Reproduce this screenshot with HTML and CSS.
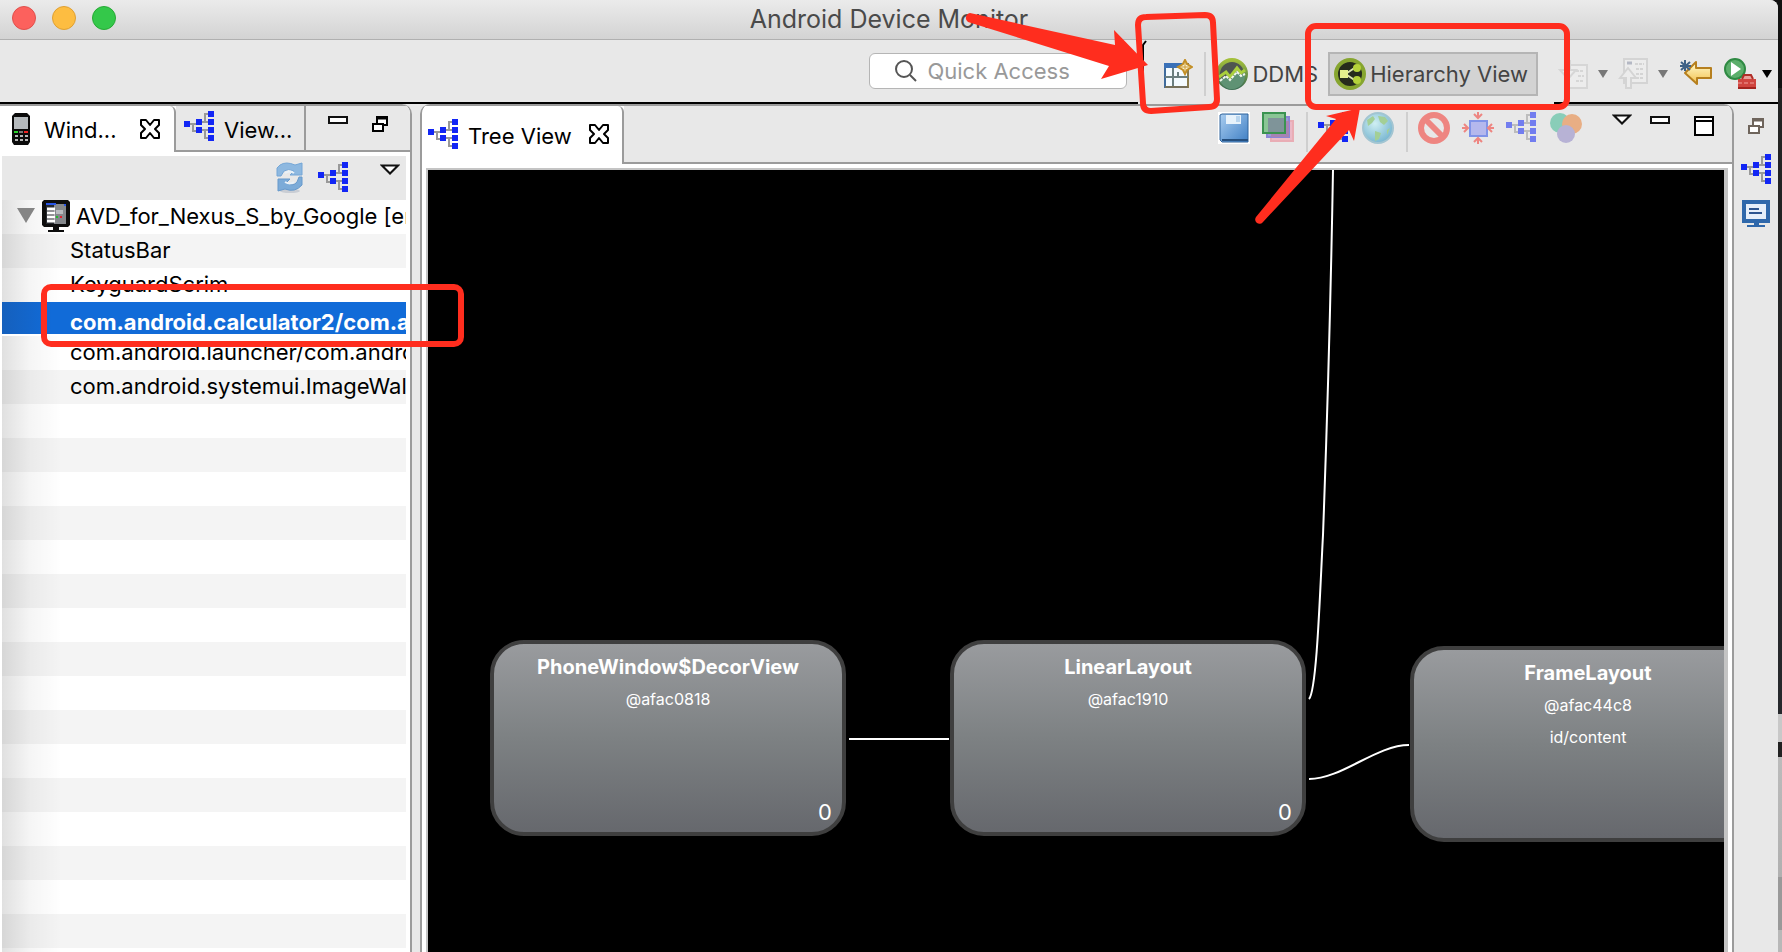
FILE: index.html
```html
<!DOCTYPE html>
<html lang="en">
<head>
<meta charset="utf-8">
<title>Android Device Monitor</title>
<link rel="stylesheet" href="styles.css">
</head>
<body>
<svg class="defs" aria-hidden="true">
  <defs>
    <linearGradient id="blue" x1="0" y1="0" x2="1" y2="1"><stop offset="0" stop-color="#a9cdf0"/><stop offset="1" stop-color="#3f7fc4"/></linearGradient>
    <linearGradient id="green" x1="0" y1="0" x2="0" y2="1"><stop offset="0" stop-color="#a3bf3a"/><stop offset="1" stop-color="#3d6d52"/></linearGradient>
    <linearGradient id="gold" x1="0" y1="0" x2="0" y2="1"><stop offset="0" stop-color="#fffbd0"/><stop offset="1" stop-color="#f3c04c"/></linearGradient>
    <radialGradient id="sea" cx=".4" cy=".35" r=".7"><stop offset="0" stop-color="#cfeff2"/><stop offset="1" stop-color="#74b3cf"/></radialGradient>
    <symbol id="tree" viewBox="0 0 30 30">
      <path d="M6 13h6M9 12v8h3M18 11h6M18 19h6M21 11V3h3M21 19v8h3" fill="none" stroke="#999" stroke-width="2"/>
      <path d="M0 10h6v6H0zM12 8h6v6h-6zM12 16h6v6h-6zM24 0h6v6h-6zM24 8h6v6h-6zM24 16h6v6h-6zM24 24h6v6h-6z" fill="#1226f5"/>
    </symbol>
    <symbol id="close" viewBox="0 0 20 20">
      <path d="M1 1h5l4 5 4-5h5v5l-4 4 4 4v5h-5l-4-5-4 5H1v-5l4-4-4-4z" fill="#fff" stroke="#000" stroke-width="2" stroke-linejoin="round"/>
    </symbol>
    <symbol id="menu" viewBox="0 0 20 12"><path d="M2 1.500h16L10 9.500z" fill="#fff" stroke="#111" stroke-width="2"/></symbol>
    <symbol id="min" viewBox="0 0 20 8"><path d="M1 1h18v6H1z" fill="#fff" stroke="#111" stroke-width="2"/></symbol>
    <symbol id="restore" viewBox="0 0 16 16"><path d="M5 1h10v8H5z" fill="#fff" stroke="currentColor" stroke-width="2"/><path d="M5 2h10" stroke="currentColor" stroke-width="3"/><path d="M1 8h10v7H1z" fill="#fff" stroke="currentColor" stroke-width="2"/></symbol>
    <symbol id="caret" viewBox="0 0 10 8"><path d="M0 0h10L5 8z" fill="currentColor"/></symbol>
  </defs>
</svg>

<div class="window">
  <header class="titlebar">
    <div class="lights">
      <button class="light red" aria-label="Close"></button>
      <button class="light yellow" aria-label="Minimize"></button>
      <button class="light green" aria-label="Zoom"></button>
    </div>
    <h1>Android Device Monitor</h1>
  </header>

  <div class="toolbar">
    <label class="search">
      <svg width="22" height="22" viewBox="0 0 22 22"><circle cx="9" cy="9" r="8" fill="none" stroke="#555" stroke-width="2"/><path d="M15 15l6 6" stroke="#555" stroke-width="2"/></svg>
      <input type="text" placeholder="Quick Access" aria-label="Quick Access">
    </label>
    <button class="open-persp" aria-label="Open Perspective">
      <svg width="30" height="30" viewBox="0 0 30 30"><path d="M2 5h23v23H2z" fill="#f4fbff" stroke="#8a7b4c" stroke-width="2"/><path d="M1 4h18v5H1z" fill="#3a71b8"/><path d="M2 9v20" stroke="#3f6b9c" stroke-width="2"/><path d="M10 9v19M2 18h23M15 13v5" stroke="#6b7f80" stroke-width="2"/><path d="M2 28h23" stroke="#75705a" stroke-width="2"/><path d="M22 1l2 4 5 3-5 3-2 4-2-4-5-3 5-3z" fill="#fdf3cf" stroke="#c38f26" stroke-width="2"/><path d="M22 3v10M17 8h10" stroke="#c99b3a" stroke-width="1"/></svg>
    </button>
    <span class="divider"></span>
    <button class="persp">
      <svg width="32" height="32" viewBox="0 0 32 32"><circle cx="16" cy="16" r="14" fill="#4f5650" stroke="url(#green)" stroke-width="4"/><path d="M3 22l7-4 4 3 7-8 4 4 4-3v5a13 13 0 0 1-24 6z" fill="#5f9274"/><path d="M3 19l7-5 4 5 7-9 4 5 4-3" fill="none" stroke="#a9cf3c" stroke-width="3"/><path d="M4 23l6-5 4 4 7-8 4 4 4-2" fill="none" stroke="#f3f7ec" stroke-width="2" stroke-dasharray="3 1"/></svg>
      <span>DDMS</span>
    </button>
    <button class="persp active">
      <svg width="32" height="32" viewBox="0 0 32 32"><circle cx="16" cy="16" r="14" fill="#262c1c" stroke="#86a52f" stroke-width="4"/><path d="M13 15L22 9M13 17l9 6" stroke="#dbe5b0" stroke-width="2"/><path d="M6 12h8v8H6z" fill="#e4f08c"/><circle cx="23" cy="10" r="4" fill="#b5d33a"/><circle cx="23" cy="22" r="4" fill="#b5d33a"/></svg>
      <span>Hierarchy View</span>
    </button>
    <div class="nav">
      <button class="split next" aria-label="Next annotation"><svg width="32" height="32" viewBox="0 0 32 32"><g fill="#ececec" stroke="#d6d6d6" stroke-width="2"><path d="M10 7h19v23H10z"/><path d="M18 13h8M20 18h6M18 23h8" stroke-dasharray="3 1"/><path d="M7 3h5v9h6l-8 9-8-9h5z"/></g></svg><svg class="gray" width="10" height="8"><use href="#caret"/></svg></button>
      <button class="split" aria-label="Previous annotation"><svg width="32" height="32" viewBox="0 0 32 32"><g fill="#ececec" stroke="#d4d4d4" stroke-width="2"><path d="M6 1h23v24H6z"/><path d="M9 5h5" stroke="#b4b8c4" stroke-width="3"/><path d="M17 6h9M18 11h8M18 16h8M18 20h8" stroke-dasharray="3 1"/><path d="M8 30V20H2l8-10 8 10h-5v10z"/></g></svg><svg class="gray" width="10" height="8"><use href="#caret"/></svg></button>
      <button class="split" aria-label="Last edit location"><svg width="32" height="32" viewBox="0 0 32 32"><path d="M5 15L16 4v6h15v10H17v6z" fill="url(#gold)" stroke="#b67f1e" stroke-width="2" stroke-linejoin="round"/><path d="M5 2v11M1 4l9 8M10 4l-9 8M0 8h11" stroke="#3f6286" stroke-width="2"/></svg></button>
      <button class="split run" aria-label="Run external tools"><svg width="32" height="32" viewBox="0 0 32 32"><circle cx="11" cy="11" r="10" fill="#5cae6b" stroke="#2f8a43" stroke-width="2"/><path d="M7 4l10 7-10 7z" fill="#fff"/><path d="M14 21h18v9H14z" fill="#d0453f"/><path d="M18 21l2-4h7l2 4" fill="#e7a09a" stroke="#b02e28" stroke-width="2"/><path d="M14 25h18" stroke="#f0a19c" stroke-dasharray="4 2"/><path d="M14 30h18" stroke="#a3241f" stroke-width="2"/></svg><svg class="black" width="10" height="8"><use href="#caret"/></svg></button>
    </div>
  </div>
  <div class="rule"><span></span><i></i><span class="tail"></span></div>

  <main class="workbench">
    <aside class="devices">
      <div class="tabs">
        <div class="tab selected">
          <svg width="20" height="32" viewBox="0 0 20 32"><path d="M4 0h12l3 3v26l-2 3H3l-2-3V3z" fill="#0b0b0b"/><path d="M3 4h14v12H3z" fill="#b5babd"/><path d="M3 18h4v2H3z" fill="#2bd32b"/><path d="M13 18h4v2h-4z" fill="#e22"/><path d="M8 19h4" stroke="#777" stroke-width="2"/><path d="M4 23h13M4 27h13" stroke="#b8b8b8" stroke-width="2" stroke-dasharray="3 2"/></svg>
          <span class="name">Wind...</span>
          <button aria-label="Close Windows"><svg width="20" height="20"><use href="#close"/></svg></button>
        </div>
        <div class="tab second">
          <svg width="30" height="30"><use href="#tree"/></svg>
          <span class="name">View...</span>
        </div>
        <div class="tab-tools">
          <button aria-label="Minimize"><svg width="20" height="8"><use href="#min"/></svg></button>
          <button aria-label="Restore"><svg width="16" height="16"><use href="#restore"/></svg></button>
        </div>
      </div>
      <div class="devices-body">
        <div class="list-tools">
          <button aria-label="Refresh"><svg width="28" height="32" viewBox="0 0 28 32"><ellipse cx="14" cy="29" rx="10" ry="2" fill="#c9cdd4"/><path d="M1 14V6l3-3Q10-1 19 3l7-2v12H14l4-4Q12 6 8 9l-3 5z" fill="#8db8e0" stroke="#74a6d6"/><path d="M26 15v8q-7 8-17 4l-7 2V17h12l-4 4q7 4 11-1l2-5z" fill="#7cabd8" stroke="#6799cb"/><path d="M9 11q5-3 9 0M9 20q5 3 9 0" fill="none" stroke="#e9f1f8" stroke-width="2"/></svg></button>
          <button aria-label="Load hierarchy"><svg width="30" height="30"><use href="#tree"/></svg></button>
          <button class="menu" aria-label="View menu"><svg width="20" height="12"><use href="#menu"/></svg></button>
        </div>
        <ul class="list">
          <li class="device">
            <svg class="twisty" width="18" height="15"><path d="M0 0h18L9 15z" fill="#858585"/></svg>
            <svg width="28" height="32" viewBox="0 0 28 32"><path d="M2 0h24l2 2v23l-2 2H2l-2-2V2z" fill="#0d0d0d"/><path d="M4 4h20v20H4z" fill="#85888c"/><path d="M4 4h8v20H4z" fill="#26292e"/><path d="M4 4h10" stroke="#2855e8" stroke-width="2"/><path d="M22 5h2" stroke="#2855e8" stroke-width="2"/><path d="M5 9h8M5 13h8M5 17h8M5 21h8" stroke="#fff" stroke-width="3"/><path d="M14 10h7v4h-7z" fill="#b9bcc0"/><path d="M14 16h2v2h-2z" fill="#1fbf2d"/><path d="M18 16h2v2h-2z" fill="#e0222d"/><path d="M11 27h6v3h5v2H6v-2h5z" fill="#0d0d0d"/></svg>
            <span>AVD_for_Nexus_S_by_Google [er</span>
          </li>
          <li>StatusBar</li>
          <li>KeyguardScrim</li>
          <li class="current">com.android.calculator2/com.a</li>
          <li>com.android.launcher/com.andro</li>
          <li>com.android.systemui.ImageWal</li>
        </ul>
      </div>
    </aside>

    <section class="editor">
      <div class="tabs">
        <div class="tab selected">
          <svg width="30" height="30"><use href="#tree"/></svg>
          <span class="name">Tree View</span>
          <button aria-label="Close Tree View"><svg width="20" height="20"><use href="#close"/></svg></button>
        </div>
        <div class="view-tools">
          <button aria-label="Save"><svg width="32" height="32" viewBox="0 0 32 32"><path d="M0 0h32v32H0z" fill="#fff"/><path d="M2 3l2-1h26v28H4l-2-2z" fill="url(#blue)" stroke="#31659c" stroke-width="1"/><path d="M8 3h15v9H8z" fill="#e7f2fb"/><path d="M18 4h4v6h-4z" fill="#b9d5ee"/><path d="M4 28h26" stroke="#254f7e" stroke-width="2"/></svg></button>
          <button aria-label="Capture layers"><svg width="32" height="32" viewBox="0 0 32 32"><path d="M9 9h22v20H9z" fill="#ecb8c6" stroke="#e9adb5" stroke-width="2"/><path d="M5 5h22v20H5z" fill="#9b9bd6" stroke="#8b86d6" stroke-width="2"/><path d="M9 9h18v16H9z" fill="#a683b4"/><path d="M1 1h22v20H1z" fill="#8ac595" stroke="#3a9350" stroke-width="2"/><path d="M6 6h16v14H6z" fill="#7f9499"/></svg></button>
          <span class="divider"></span>
          <button aria-label="Load hierarchy"><svg width="32" height="30" viewBox="0 0 32 30"><use href="#tree" width="30" height="30"/></svg></button>
          <button aria-label="Evaluate contrast"><svg width="32" height="32" viewBox="0 0 32 32"><circle cx="16" cy="16" r="15" fill="url(#sea)" stroke="#a2c5d2" stroke-width="2"/><path d="M5 8l6-4 2 3-3 4-4 3zM16 4l7 1 3 4-4 4-4-3zM13 19l6 2-2 6-4 2zM25 18l3-2-3 7z" fill="#a3cf96"/></svg></button>
          <span class="divider"></span>
          <button class="dim" aria-label="Stop"><svg width="32" height="32" viewBox="0 0 32 32"><circle cx="16" cy="16" r="13" fill="none" stroke="#f4362e" stroke-width="6"/><path d="M7 7l18 18" stroke="#f4362e" stroke-width="6"/></svg></button>
          <button class="dim" aria-label="Fit to screen"><svg width="32" height="32" viewBox="0 0 32 32"><path d="M8 9h17v15H8z" fill="#8b91f2" stroke="#2a4fe8" stroke-width="2"/><path d="M16 0v6M12 2l4 4 4-4M16 32v-6M12 30l4-4 4 4M0 16h6M2 12l4 4-4 4M32 16h-6M30 12l-4 4 4 4" fill="none" stroke="#f4362e" stroke-width="2"/></svg></button>
          <button class="dim" aria-label="Display view"><svg width="32" height="30" viewBox="0 0 32 30"><use href="#tree" width="30" height="30"/></svg></button>
          <button aria-label="Profile"><svg width="32" height="32" viewBox="0 0 32 32"><circle cx="10" cy="11" r="10" fill="#89cdb8"/><circle cx="22" cy="12" r="10" fill="#e8ae84"/><circle cx="16" cy="22" r="9" fill="#b7b2d5"/></svg></button>
          <button class="first" aria-label="View menu"><svg width="20" height="12"><use href="#menu"/></svg></button>
          <button class="second" aria-label="Minimize"><svg width="20" height="8"><use href="#min"/></svg></button>
          <button class="third" aria-label="Maximize"><svg width="20" height="20" viewBox="0 0 20 20"><path d="M1 1h18v18H1z" fill="#fff" stroke="#000" stroke-width="2"/><path d="M1 5h18" stroke="#000" stroke-width="2"/></svg></button>
        </div>
      </div>
      <div class="canvas">
        <svg class="edges" width="1296" height="782" viewBox="428 170 1296 782"><g fill="none" stroke="#fff" stroke-width="2"><path d="M849 739h100"/><path d="M1309 699C1317 690 1320 590 1323 535C1328 400 1331 285 1333 170"/><path d="M1309 779C1342 779 1376 745 1409 745"/></g></svg>
        <article class="node decor"><h2>PhoneWindow$DecorView</h2><p>@afac0818</p><b>0</b></article>
        <article class="node linear"><h2>LinearLayout</h2><p>@afac1910</p><b>0</b></article>
        <article class="node frame"><h2>FrameLayout</h2><p>@afac44c8</p><p>id/content</p></article>
      </div>
    </section>

    <nav class="trim">
      <button aria-label="Restore"><svg width="16" height="16"><use href="#restore"/></svg></button>
      <button aria-label="Tree Overview"><svg width="30" height="30"><use href="#tree"/></svg></button>
      <button aria-label="Console"><svg width="28" height="28" viewBox="0 0 28 28"><path d="M2 2h24v19H2z" fill="#e6effa" stroke="#2f68ab" stroke-width="4"/><path d="M7 9h10M7 13h13" stroke="#2d5590" stroke-width="2"/><path d="M12 22h5v3h6v2H5v-2h7z" fill="#2f68ab"/></svg></button>
    </nav>
  </main>
</div>
<div class="backdrop"></div>

<svg class="marks" width="1782" height="360" viewBox="0 0 1782 360" aria-hidden="true">
  <path d="M1143 102V45l3-4" fill="none" stroke="#000" stroke-width="2"/>
  <g fill="none" stroke="#ff2d1e" stroke-width="6">
    <rect x="44" y="287" width="417" height="57" rx="7"/>
    <rect x="1308" y="26" width="259" height="81" rx="8"/>
    <path d="M1146 17l59-2q8 0 8 8l4 76q0 8-8 8l-58 4q-8 0-8-8l-5-78q0-8 8-8z"/>
  </g>
  <path d="M970 13L1115 45 1114 30 1148 65 1101 79 1109 66 968 22A5 5 0 0 1 970 13z" fill="#ff2d1e"/>
  <path d="M1256 217L1336 119 1326 116 1360 108 1354 141 1349 130 1263 222A4 4 0 0 1 1256 217z" fill="#ff2d1e"/>
</svg>
</body>
</html>
```
FILE: styles.css
```css
* { box-sizing: border-box; }
body {
  margin: 0;
  height: 100vh;
  display: flex;
  overflow: hidden;
  position: relative;
  background: #111;
  font-family: Inter, "Liberation Sans", sans-serif;
  font-size: 22px;
  color: #000;
}
button {
  margin: 0;
  padding: 0;
  border: 0;
  background: none;
  font: inherit;
  color: inherit;
}
svg { display: block; flex: none; }
.defs { position: absolute; width: 0; height: 0; }
.marks { position: absolute; top: 0; left: 0; pointer-events: none; }

.window {
  flex: 1;
  min-width: 0;
  display: flex;
  flex-direction: column;
  background: #e8e8e8;
  border-top-right-radius: 8px;
  overflow: hidden;
}
.backdrop {
  width: 4px;
  background: linear-gradient(#111 0, #111 88px, #222 88px, #26282c 714px, #c8c8c8 714px, #c8c8c8 742px, #222 742px, #222 757px, #bbb 757px, #b0b0b0 877px, #999 877px, #999 930px, #b8b8b8 930px);
}

.titlebar {
  height: 40px;
  display: grid;
  grid-template-columns: 1fr auto 1fr;
  align-items: center;
  padding: 0 12px;
  background: linear-gradient(#ebebeb, #d3d3d3);
  border-bottom: 1px solid #b0b0b0;
}
.titlebar h1 {
  margin: 0;
  padding-bottom: 2px;
  font-size: 25px;
  line-height: 36px;
  font-weight: 400;
  color: #4a4a4a;
}
.lights { display: flex; gap: 16px; padding-bottom: 3px; }
.light { width: 24px; height: 24px; border-radius: 50%; border: 1px solid; }
.red { background: #fc615d; border-color: #e0504c; }
.yellow { background: #fdbd41; border-color: #dfa033; }
.green { background: #34c84a; border-color: #27aa35; }

.toolbar {
  height: 62px;
  display: flex;
  align-items: center;
  justify-content: flex-end;
  padding: 6px 6px 0 0;
  color: #444;
}
.search {
  width: 258px;
  height: 36px;
  display: flex;
  align-items: center;
  gap: 10px;
  margin-right: 36px;
  margin-bottom: 6px;
  padding-left: 25px;
  background: #fff;
  border: 1px solid #b5b5b5;
  border-radius: 6px;
}
.search input {
  min-width: 0;
  flex: 1;
  border: 0;
  padding: 0;
  outline: 0;
  background: none;
  font: inherit;
}
.search input::placeholder { color: #999; opacity: 1; }
.divider { width: 2px; height: 44px; background: #cfcfcf; }
.open-persp { margin-right: 11px; }
.persp {
  height: 44px;
  display: flex;
  align-items: center;
  gap: 4px;
  padding: 0 10px;
  line-height: 32px;
  white-space: nowrap;
}
.persp.active {
  padding: 0 8px 0 4px;
  background: #d3d3d3;
  border: 2px solid #b5b5b5;
}
.nav { display: flex; gap: 12px; margin-left: 20px; }
.split { display: flex; align-items: center; gap: 8px; }
.split.next { margin-right: -2px; }
.split.run { gap: 6px; }
.gray { color: #777; }
.black { color: #000; }

.rule { height: 2px; display: flex; }
.rule span { flex: 1; background: #000; }
.rule i { width: 416px; }
.rule .tail { flex: none; width: 224px; }

.workbench { flex: 1; min-height: 0; display: flex; }
.tabs { display: flex; border-top: 2px solid #9b9b9b; }
.tab { display: flex; align-items: center; white-space: nowrap; }
.tab.selected { background: #fff; border-right: 2px solid #9b9b9b; border-top-right-radius: 6px; }

.devices {
  width: 412px;
  flex: none;
  display: flex;
  flex-direction: column;
  border-right: 2px solid #9b9b9b;
  border-top-right-radius: 10px;
  overflow: hidden;
}
.devices .tabs { height: 48px; background: #fff; }
.devices .tab { height: 46px; padding: 0 14px 0 11px; }
.devices .tab.selected { width: 176px; }
.devices .tab.selected .name { margin-left: 13px; padding-top: 2px; flex: 1; }
.devices .tab.second {
  width: 130px;
  padding: 0 0 4px 8px;
  gap: 10px;
  background: #e8e8e8;
  border-right: 2px solid #9b9b9b;
  border-bottom: 2px solid #9b9b9b;
}
.devices .second .name { padding-top: 7px; }
.tab-tools {
  flex: 1;
  display: flex;
  gap: 24px;
  padding: 10px 0 0 22px;
  align-items: flex-start;
  background: #e8e8e8;
  border-bottom: 2px solid #9b9b9b;
}
.devices-body {
  flex: 1;
  display: flex;
  flex-direction: column;
  padding: 4px 4px 0 2px;
  background: #fff;
}
.list-tools {
  height: 44px;
  display: flex;
  justify-content: flex-end;
  align-items: flex-start;
  gap: 14px;
  padding: 6px 6px 0 0;
  background: #e8e8e8;
}
.list-tools .menu { margin: 2px 0 0 18px; }
.list {
  flex: 1;
  margin: 0;
  padding: 0;
  list-style: none;
  background:
    linear-gradient(to right, rgba(0, 0, 0, .12), rgba(0, 0, 0, .04) 28px, rgba(0, 0, 0, 0) 60px),
    repeating-linear-gradient(#fff 0, #fff 34px, #f4f4f4 34px, #f4f4f4 68px);
}
.list li {
  height: 34px;
  padding-left: 68px;
  line-height: 32px;
  white-space: nowrap;
  overflow: hidden;
}
.list .device { display: flex; align-items: flex-start; padding-left: 15px; }
.list .device span { margin-left: 6px; }
.list .twisty { margin: 8px 7px 0 0; }
.list .current {
  background: linear-gradient(to right, #1560bd, #116bd8 50px);
  border-bottom: 2px solid #fff;
  line-height: 40px;
  font-weight: 700;
  color: #fff;
}

.editor {
  flex: 1;
  min-width: 0;
  display: flex;
  flex-direction: column;
  margin-left: 8px;
  background: #fff;
  border: 2px solid #9b9b9b;
  border-width: 0 2px;
  border-radius: 10px 10px 0 0;
  overflow: hidden;
}
.editor .tabs { height: 60px; }
.editor .tab { padding: 0 13px 0 6px; }
.editor .tab svg { margin-bottom: 3px; }
.editor .tab .name { margin: 0 17px 0 10px; padding-top: 2px; }
.view-tools {
  flex: 1;
  display: flex;
  align-items: flex-start;
  justify-content: flex-end;
  gap: 12px;
  padding: 6px 18px 0 0;
  background: #e8e8e8;
  border-bottom: 2px solid #9b9b9b;
}
.view-tools .divider { height: 40px; margin-right: -2px; }
.view-tools .dim { opacity: .55; }
.view-tools .first { margin: 2px 0 0 18px; }
.view-tools .second { margin: 4px 0 0 6px; }
.view-tools .third { margin: 4px 0 0 12px; }
.canvas {
  flex: 1;
  position: relative;
  overflow: hidden;
  margin: 4px 4px 0;
  background: #000;
  border: 2px solid #c4c4c4;
  border-width: 2px 4px 0 2px;
}
.edges { position: absolute; top: 0; left: 0; }
.node {
  position: absolute;
  width: 356px;
  height: 196px;
  padding-top: 7px;
  border: 4px solid #3f3f3f;
  border-radius: 34px;
  background: linear-gradient(#999b9e, #7d8183 50%, #66686d);
  color: #fff;
  text-align: center;
}
.decor { left: 62px; top: 470px; }
.linear { left: 522px; top: 470px; }
.frame { left: 982px; top: 476px; }
.node h2 { margin: 0; font-size: 20px; line-height: 32px; font-weight: 700; }
.node p { margin: 0; font-size: 16px; line-height: 32px; }
.node b { position: absolute; right: 10px; bottom: 6px; font-weight: 400; line-height: 28px; }

.trim {
  width: 44px;
  flex: none;
  display: flex;
  flex-direction: column;
  align-items: center;
  padding-top: 14px;
  color: #6f655c;
}
.trim button + button { margin-top: 20px; }
.trim button + button + button { margin-top: 16px; }
```
